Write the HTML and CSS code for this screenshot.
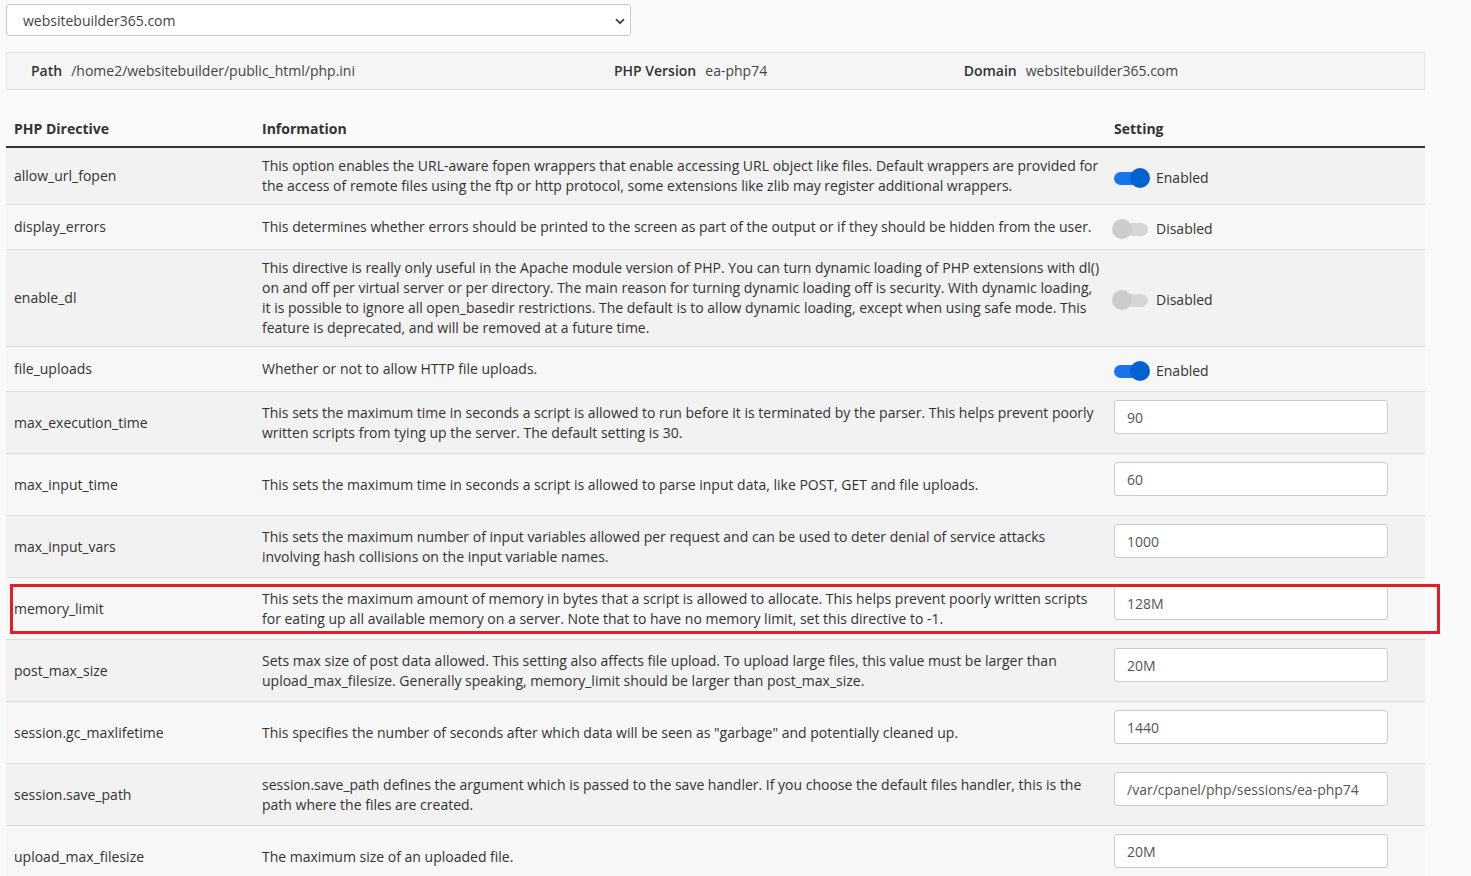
FILE: index.html
```html
<!DOCTYPE html>
<html>
<head>
<meta charset="utf-8">
<link rel="stylesheet" href="styles.css">
</head>
<body>
<div class="page">
  <div class="select-wrap">
    <div class="select">
      <span>websitebuilder365.com</span>
      <svg class="chev" width="10" height="7" viewBox="0 0 10 7"><path d="M1 1.2 L5 5.2 L9 1.2" fill="none" stroke="#444" stroke-width="1.8"/></svg>
    </div>
  </div>

  <div class="infobar">
    <div class="info-col"><b>Path</b><span>/home2/websitebuilder/public_html/php.ini</span></div>
    <div class="info-col"><b>PHP Version</b><span>ea-php74</span></div>
    <div class="info-col"><b>Domain</b><span>websitebuilder365.com</span></div>
  </div>

  <div class="table-wrap">
    <table class="tbl">
      <colgroup><col class="c1"><col class="c2"><col class="c3"></colgroup>
      <thead>
        <tr><th>PHP Directive</th><th>Information</th><th>Setting</th></tr>
      </thead>
      <tbody>
        <tr class="odd">
          <td>allow_url_fopen</td>
          <td>This option enables the URL-aware fopen wrappers that enable accessing URL object like files. Default wrappers are provided for the access of remote files using the ftp or http protocol, some extensions like zlib may register additional wrappers.</td>
          <td><div class="toggle on"><span class="track"><span class="knob"></span></span><span class="tlabel">Enabled</span></div></td>
        </tr>
        <tr class="even">
          <td>display_errors</td>
          <td>This determines whether errors should be printed to the screen as part of the output or if they should be hidden from the user.</td>
          <td><div class="toggle off"><span class="track"><span class="knob"></span></span><span class="tlabel">Disabled</span></div></td>
        </tr>
        <tr class="odd">
          <td>enable_dl</td>
          <td>This directive is really only useful in the Apache module version of PHP. You can turn dynamic loading of PHP extensions with dl() on and off per virtual server or per directory. The main reason for turning dynamic loading off is security. With dynamic loading, it is possible to ignore all open_basedir restrictions. The default is to allow dynamic loading, except when using safe mode. This feature is deprecated, and will be removed at a future time.</td>
          <td><div class="toggle off"><span class="track"><span class="knob"></span></span><span class="tlabel">Disabled</span></div></td>
        </tr>
        <tr class="even">
          <td>file_uploads</td>
          <td>Whether or not to allow HTTP file uploads.</td>
          <td><div class="toggle on"><span class="track"><span class="knob"></span></span><span class="tlabel">Enabled</span></div></td>
        </tr>
        <tr class="odd inrow">
          <td>max_execution_time</td>
          <td>This sets the maximum time in seconds a script is allowed to run before it is terminated by the parser. This helps prevent poorly written scripts from tying up the server. The default setting is 30.</td>
          <td><div class="field"><input type="text" value="90"></div></td>
        </tr>
        <tr class="even inrow">
          <td>max_input_time</td>
          <td>This sets the maximum time in seconds a script is allowed to parse input data, like POST, GET and file uploads.</td>
          <td><div class="field"><input type="text" value="60"></div></td>
        </tr>
        <tr class="odd inrow">
          <td>max_input_vars</td>
          <td>This sets the maximum number of input variables allowed per request and can be used to deter denial of service attacks involving hash collisions on the input variable names.</td>
          <td><div class="field"><input type="text" value="1000"></div></td>
        </tr>
        <tr class="even inrow highlight">
          <td>memory_limit</td>
          <td>This sets the maximum amount of memory in bytes that a script is allowed to allocate. This helps prevent poorly written scripts for eating up all available memory on a server. Note that to have no memory limit, set this directive to -1.</td>
          <td><div class="field"><input type="text" value="128M"></div></td>
        </tr>
        <tr class="odd inrow">
          <td>post_max_size</td>
          <td>Sets max size of post data allowed. This setting also affects file upload. To upload large files, this value must be larger than upload_max_filesize. Generally speaking, memory_limit should be larger than post_max_size.</td>
          <td><div class="field"><input type="text" value="20M"></div></td>
        </tr>
        <tr class="even inrow">
          <td>session.gc_maxlifetime</td>
          <td>This specifies the number of seconds after which data will be seen as "garbage" and potentially cleaned up.</td>
          <td><div class="field"><input type="text" value="1440"></div></td>
        </tr>
        <tr class="odd inrow">
          <td>session.save_path</td>
          <td>session.save_path defines the argument which is passed to the save handler. If you choose the default files handler, this is the path where the files are created.</td>
          <td><div class="field"><input type="text" value="/var/cpanel/php/sessions/ea-php74"></div></td>
        </tr>
        <tr class="even inrow">
          <td>upload_max_filesize</td>
          <td>The maximum size of an uploaded file.</td>
          <td><div class="field"><input type="text" value="20M"></div></td>
        </tr>
      </tbody>
    </table>
    <div class="redbox"></div>
  </div>
</div>
</body>
</html>
```

FILE: styles.css
```css
html, body {
  margin: 0;
  padding: 0;
  background: #fafafa;
}
body {
  font-family: "Open Sans", "Noto Sans", sans-serif;
  font-size: 14px;
  line-height: 20px;
  color: #333;
}
.page {
  padding: 4px 46px 0 6px;
}
.select-wrap {
  width: 625px;
}
.select {
  height: 32px;
  box-sizing: border-box;
  border: 1px solid #c9c9c9;
  border-radius: 3px;
  background: #fff;
  display: flex;
  align-items: center;
  justify-content: space-between;
  padding: 1px 5px 0 16px;
  color: #444;
}
.chev { display: block; margin-top: 1px; }

.infobar {
  margin-top: 16px;
  height: 38px;
  box-sizing: border-box;
  border: 1px solid #e3e3e3;
  background: #f5f5f5;
  padding: 0 9px;
  display: grid;
  grid-template-columns: 5fr 3fr 4fr;
  align-items: center;
}
.info-col {
  padding: 0 15px;
  display: flex;
  gap: 9px;
  color: #444;
}
.info-col b { font-weight: 600; color: #333; }

.table-wrap {
  position: relative;
  margin-top: 10px;
}
.tbl {
  width: 100%;
  border-collapse: collapse;
  table-layout: fixed;
}
.c1 { width: 248px; }
.c3 { width: 319px; }
.tbl th {
  text-align: left;
  font-weight: 700;
  color: #333;
  padding: 19px 8px 7px;
  border-bottom: 2px solid #333;
  line-height: 20px;
}
.tbl td {
  padding: 8px 8px;
  vertical-align: middle;
  border-top: 1px solid #ddd;
  color: #333;
}
.tbl td:nth-child(2) { padding-right: 2px; }
.tbl tbody tr:first-child td { border-top: none; }
.odd td { background: #f2f2f2; }
.even td { background: #f7f7f7; }

.toggle {
  display: flex;
  align-items: center;
  height: 28px;
  box-sizing: border-box;
  padding-top: 4px;
}
.track {
  position: relative;
  display: block;
  width: 34px;
  height: 13px;
  border-radius: 7px;
}
.knob {
  position: absolute;
  top: -4px;
  width: 20px;
  height: 20px;
  border-radius: 50%;
}
.on .track { background: #1a74ee; }
.on .knob { right: -2px; background: #0061d1; }
.off .track { background: #d6d6d6; width: 34px; }
.off .knob { left: -2px; background: #cccccc; }
.on .tlabel { margin-left: 8px; }
.off .tlabel { margin-left: 8px; }
.tlabel { color: #333; }

.field { padding: 0 0 11px; }
.field input {
  display: block;
  width: 274px;
  height: 34px;
  box-sizing: border-box;
  border: 1px solid #ccc;
  border-radius: 3px;
  background: #fff;
  padding: 0 12px;
  font-family: "Open Sans", "Noto Sans", sans-serif;
  font-size: 14px;
  color: #555;
  outline: none;
}

.redbox {
  position: absolute;
  left: 4px;
  top: 484px;
  width: 1430px;
  height: 50px;
  box-sizing: border-box;
  border: 3px solid #e41e26;
  pointer-events: none;
}
```
